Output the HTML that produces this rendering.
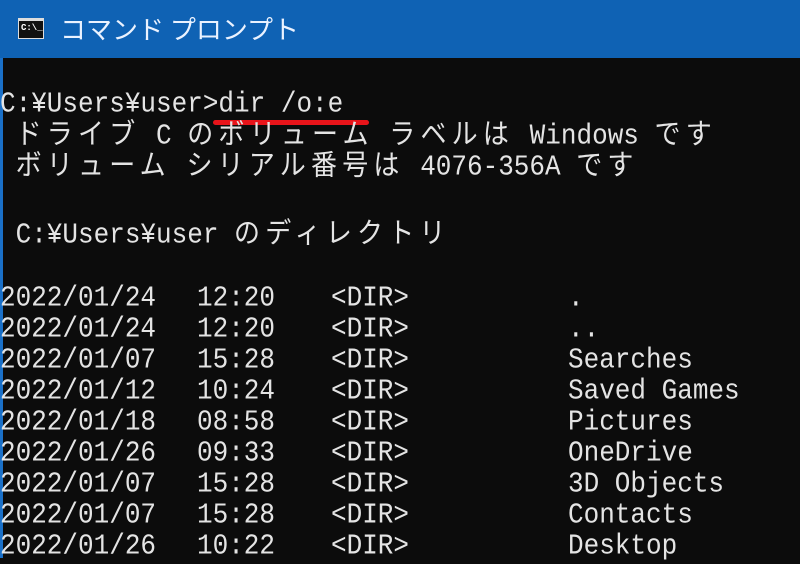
<!DOCTYPE html>
<html><head><meta charset="utf-8"><style>
body{margin:0;width:800px;height:558px;overflow:hidden;background:#0c0c0c;position:relative}
.tb{position:absolute;left:0;top:0;width:800px;height:58px;background:#0f62b4}
.tt{position:absolute;left:60px;top:12px;color:#eaf2ff;font:26px "Noto Sans CJK JP","Liberation Sans",sans-serif;line-height:34px}
.ic{position:absolute;left:18px;top:18px;width:26px;height:21px;background:#111;border:1px solid #ddd;border-top:3px solid #ddd;box-sizing:border-box;color:#fff;font:bold 9px "Liberation Mono",monospace;line-height:15px;text-indent:2px}
.lb{position:absolute;left:0;top:58px;width:3px;height:500px;background:#1a70c8}
.l{position:absolute;color:#e4e4e4;font:26px "Liberation Mono","Noto Sans CJK JP",monospace;line-height:31px;white-space:pre;transform:scaleY(1.1)}
.j{letter-spacing:5.2px}
.red{position:absolute;left:213px;top:120px;width:156px;height:5px;background:#e8141a;border-radius:3px}
</style></head><body>
<div class="tb"><div class="ic">C:\_</div><div class="tt">コマンド プロンプト</div></div>
<div class="lb"></div>
<div class="l" style="left:0;top:89px">C:¥Users¥user&gt;dir /o:e</div>
<div class="red"></div>
<div class="l" style="left:0;top:121px"> <span class="j">ドライブ</span> C <span class="j">のボリューム</span> <span class="j">ラベルは</span> Windows <span class="j">です</span></div>
<div class="l" style="left:0;top:152px"> <span class="j">ボリューム</span> <span class="j">シリアル番号は</span> 4076-356A <span class="j">です</span></div>
<div class="l" style="left:0;top:220px"> C:¥Users¥user <span class="j">のディレクトリ</span></div>
<div class="l" style="left:0;top:283px">2022/01/24</div><div class="l" style="left:197px;top:283px">12:20</div><div class="l" style="left:331px;top:283px">&lt;DIR&gt;</div><div class="l" style="left:568px;top:283px">.</div>
<div class="l" style="left:0;top:314px">2022/01/24</div><div class="l" style="left:197px;top:314px">12:20</div><div class="l" style="left:331px;top:314px">&lt;DIR&gt;</div><div class="l" style="left:568px;top:314px">..</div>
<div class="l" style="left:0;top:345px">2022/01/07</div><div class="l" style="left:197px;top:345px">15:28</div><div class="l" style="left:331px;top:345px">&lt;DIR&gt;</div><div class="l" style="left:568px;top:345px">Searches</div>
<div class="l" style="left:0;top:376px">2022/01/12</div><div class="l" style="left:197px;top:376px">10:24</div><div class="l" style="left:331px;top:376px">&lt;DIR&gt;</div><div class="l" style="left:568px;top:376px">Saved Games</div>
<div class="l" style="left:0;top:407px">2022/01/18</div><div class="l" style="left:197px;top:407px">08:58</div><div class="l" style="left:331px;top:407px">&lt;DIR&gt;</div><div class="l" style="left:568px;top:407px">Pictures</div>
<div class="l" style="left:0;top:438px">2022/01/26</div><div class="l" style="left:197px;top:438px">09:33</div><div class="l" style="left:331px;top:438px">&lt;DIR&gt;</div><div class="l" style="left:568px;top:438px">OneDrive</div>
<div class="l" style="left:0;top:469px">2022/01/07</div><div class="l" style="left:197px;top:469px">15:28</div><div class="l" style="left:331px;top:469px">&lt;DIR&gt;</div><div class="l" style="left:568px;top:469px">3D Objects</div>
<div class="l" style="left:0;top:500px">2022/01/07</div><div class="l" style="left:197px;top:500px">15:28</div><div class="l" style="left:331px;top:500px">&lt;DIR&gt;</div><div class="l" style="left:568px;top:500px">Contacts</div>
<div class="l" style="left:0;top:531px">2022/01/26</div><div class="l" style="left:197px;top:531px">10:22</div><div class="l" style="left:331px;top:531px">&lt;DIR&gt;</div><div class="l" style="left:568px;top:531px">Desktop</div>
</body></html>
